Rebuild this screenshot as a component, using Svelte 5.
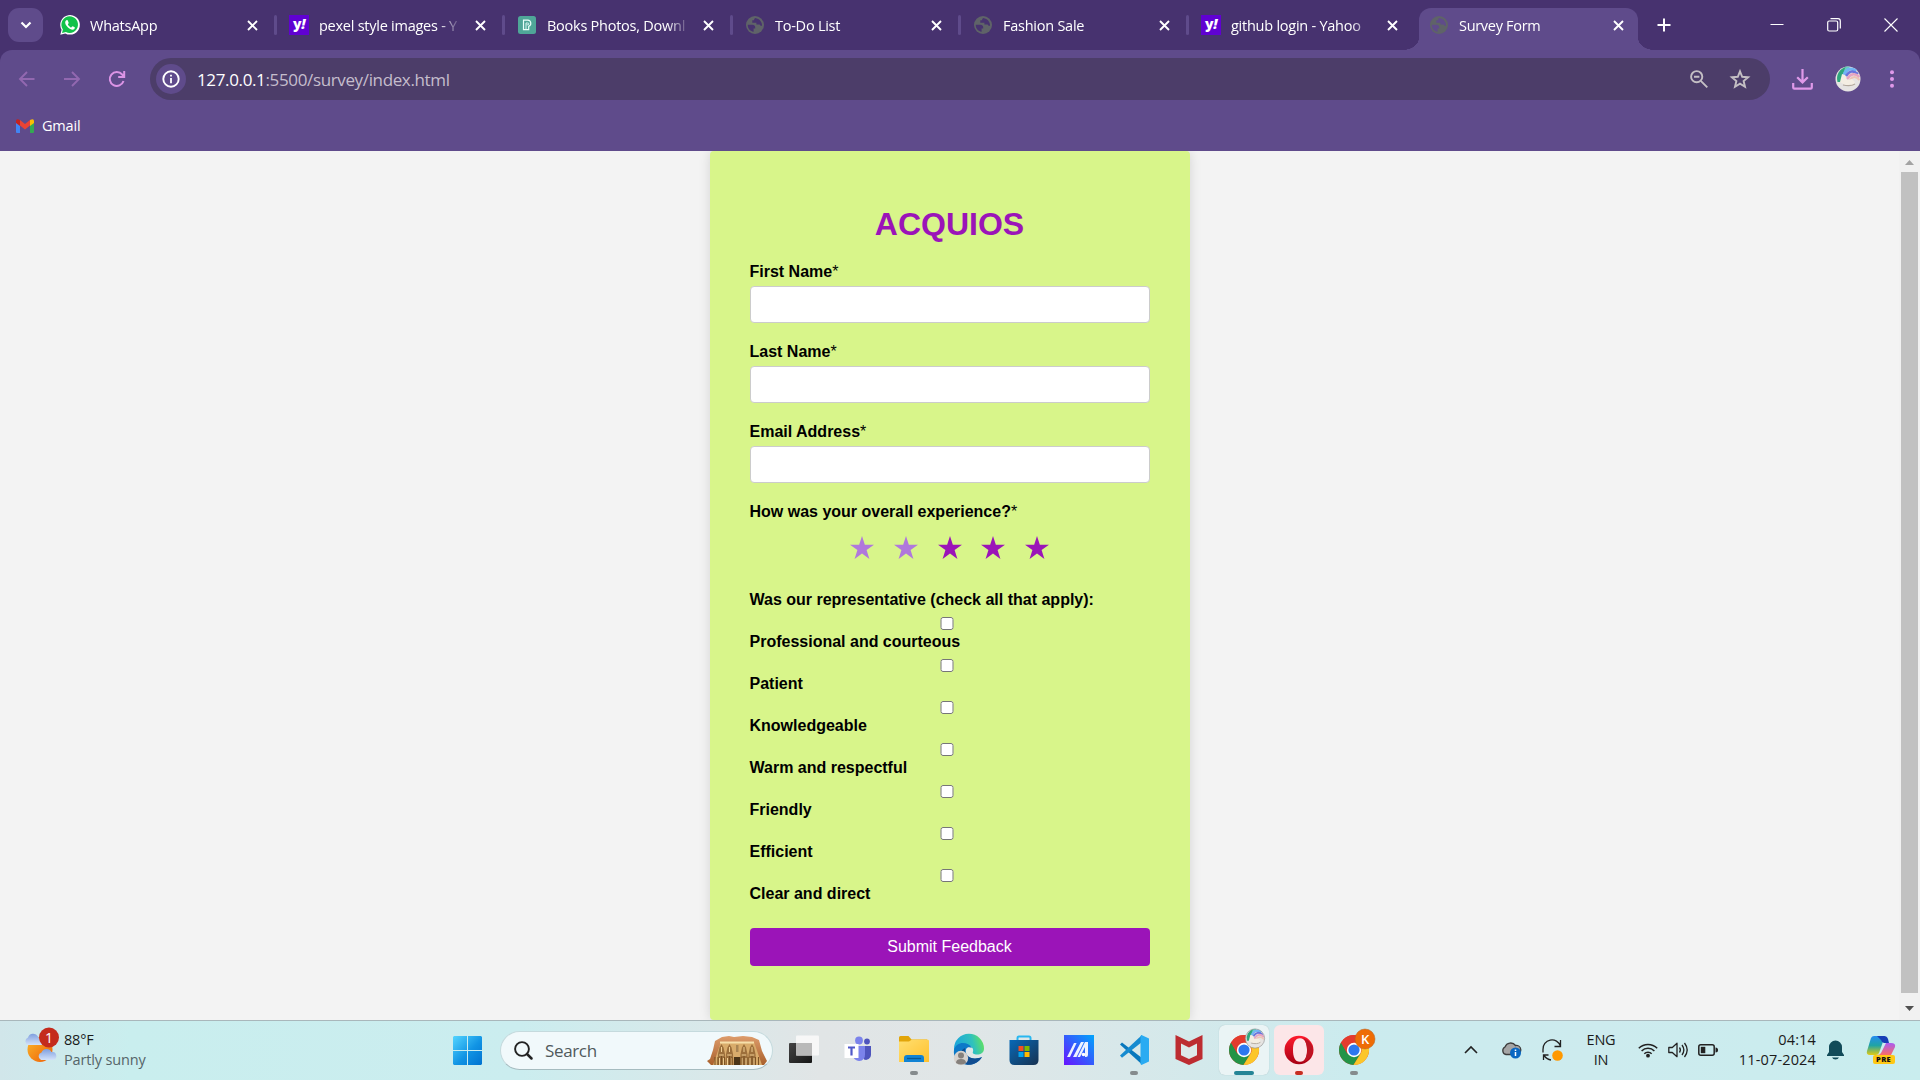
<script>
  const tabs = [
    { icon: 'whatsapp', title: 'WhatsApp' },
    { icon: 'yahoo', title: 'pexel style images - Y' },
    { icon: 'pexels', title: 'Books Photos, Downl' },
    { icon: 'globe', title: 'To-Do List' },
    { icon: 'globe', title: 'Fashion Sale' },
    { icon: 'yahoo', title: 'github login - Yahoo' },
    { icon: 'globe', title: 'Survey Form', active: true }
  ];
  const fields = ['First Name', 'Last Name', 'Email Address'];
  const stars = [false, false, true, true, true];
  const traits = [
    'Professional and courteous',
    'Patient',
    'Knowledgeable',
    'Warm and respectful',
    'Friendly',
    'Efficient',
    'Clear and direct'
  ];
  const apps = [
    { name: 'taskview' },
    { name: 'teams' },
    { name: 'explorer', mark: 'dot' },
    { name: 'edge' },
    { name: 'store' },
    { name: 'asus' },
    { name: 'vscode', mark: 'dot' },
    { name: 'mcafee' },
    { name: 'chrome', tile: 'tile-current', mark: 'bar' },
    { name: 'opera', tile: 'tile-alert', mark: 'red' },
    { name: 'chromek', mark: 'dot' }
  ];
</script>

{#snippet cross()}
  <svg class="cross" width="11" height="11" viewBox="0 0 11 11"><path d="M1 1l9 9M10 1l-9 9" stroke="#fff" stroke-width="1.9" fill="none" /></svg>
{/snippet}

{#snippet favicon(name)}
  {#if name === 'whatsapp'}
    <svg width="20" height="20" viewBox="0 0 20 20">
      <path d="M0.3 19.7L1.6 14.8A9.8 9.8 0 1 1 5.3 18.4Z" fill="#fff" />
      <path d="M2 18l.9-3.6A8.3 8.3 0 1 1 5.9 17Z" fill="#12c24a" />
      <path d="M7 5.1c-.8 0-1.8 1-1.8 2.4 0 3 4.4 7.2 7.4 7.2 1.4 0 2.3-1 2.3-2.1 0-.4-2-1.4-2.4-1.4s-.9 1.2-1.3 1.2c-.7 0-3.3-2.2-3.3-3 0-.4.8-.8.8-1.3 0-.4-.8-2.4-1.1-2.8z" fill="#fff" />
    </svg>
  {:else if name === 'yahoo'}
    <span class="yahoo">y<i>!</i></span>
  {:else if name === 'pexels'}
    <svg width="20" height="20" viewBox="0 0 20 20">
      <rect x="1" y="1" width="18" height="18" rx="2.5" fill="#4fa698" />
      <path d="M6.500 5.200h4.300a3.200 3.200 0 0 1 .9 6.200v3.200H6.500z" fill="none" stroke="#e9fffa" stroke-width="1.200" /><path d="M9 14.500V8h1.600q1.300 0 1.300.900t-1.300.900H9.500" fill="none" stroke="#e9fffa" stroke-width=".9" />
    </svg>
  {:else}
    <svg width="20" height="20" viewBox="0 0 20 20">
      <circle cx="10" cy="10" r="9" fill="#5f6368" />
      <path d="M2.8 9.7h4.4c2 0 3 1 3 2.6v1.2H8.6v3.2C4.8 16 2.5 13.3 2.8 9.7zM10.3 2.9c-1 .8-1.3 1.4-1.2 2.3H7.3v2.6h4.1v1.7h3.2l1 1.3h1.5c0-4-2.4-7-6.8-7.9z" class="land" />
    </svg>
  {/if}
{/snippet}

{#snippet chrome()}
  <circle cx="15" cy="15" r="15" fill="#e33b2e" />
  <path d="M2 7.5A15 15 0 0 0 14.5 30L21.5 18.8 15 15 8.5 18.8Z" fill="#239447" />
  <path d="M28 7.5A15 15 0 0 1 14.5 30L21.5 18.8A7.5 7.5 0 0 0 21.5 11.2L15 7.5Z" fill="#fcc629" />
  <path d="M2 7.5A15 15 0 0 1 28 7.5H15A7.5 7.5 0 0 0 8.5 18.8Z" fill="#e33b2e" />
  <circle cx="15" cy="15" r="7.2" fill="#fff" />
  <circle cx="15" cy="15" r="5.6" fill="#2d78ee" />
{/snippet}

{#snippet unicorn()}
  <circle cx="13" cy="13" r="12.5" fill="#e6e4e2" />
  <path d="M2.500 16A12.500 12.500 0 0 1 11 .700L13 3 7 16Z" fill="#2fa67c" />
  <path d="M10.500 .800A12.500 12.500 0 0 1 15 .700L8 11l-2 3z" fill="#69cfc0" />
  <path d="M9 9C11 3 16 1 21 5" fill="none" stroke="#71b5f4" stroke-width="3" />
  <path d="M11 10C14 5 18 4 23 8" fill="none" stroke="#6a74dd" stroke-width="2.500" />
  <path d="M12 13C16 7 20 7 24.500 11" fill="none" stroke="#e7a4c2" stroke-width="2.500" />
  <path d="M14 15C17 10 21 10 24.500 14" fill="none" stroke="#eec3b4" stroke-width="2" />
  <path d="M5 16L7 8l3 1 2 5 5-1 3 3-2 4-8-1Z" fill="#f4eee3" />
  <path d="M8 19c5 1 9 1 12-1" fill="none" stroke="#b3a99e" stroke-width="1.2" />
{/snippet}

{#snippet appIcon(name)}
  {#if name === 'taskview'}
    <svg width="34" height="34" viewBox="0 0 34 34"><defs><linearGradient id="tv" x2="1" y2="1"><stop stop-color="#444" /><stop offset="1" stop-color="#161616" /></linearGradient></defs>
      <rect x="2" y="10" width="23" height="20" rx="1" fill="url(#tv)" /><rect x="9" y="2.500" width="23" height="20" rx="1" fill="#f7f7f7" /><rect x="9" y="10" width="16" height="12.5" fill="#b9b9b9" />
    </svg>
  {:else if name === 'teams'}
    <svg width="34" height="34" viewBox="0 0 34 34">
      <circle cx="25" cy="8.500" r="2.900" fill="#4e55bd" /><circle cx="17" cy="7.500" r="3.900" fill="#7b83eb" />
      <path d="M20 13h9v9a5 5 0 0 1-7 4.500z" fill="#4e55bd" /><path d="M11 13h12v8.500a6 6 0 0 1-12 1z" fill="#7b83eb" />
      <rect x="2.500" y="11" width="14" height="14" fill="#fff" /><path d="M6 14.500h7M9.500 14v8.500" stroke="#5059c9" stroke-width="2.200" />
    </svg>
  {:else if name === 'explorer'}
    <svg width="34" height="34" viewBox="0 0 34 34"><defs><linearGradient id="fo" x2="1" y2="1"><stop stop-color="#ffdf70" /><stop offset="1" stop-color="#ffc12e" /></linearGradient></defs>
      <path d="M2 4.500q0-1.500 1.500-1.500h8l3 3.500H30V12H2z" fill="#e2a50a" /><path d="M2 8.500h10l3-2h15.500q1.500 0 1.500 1.500v21H2z" fill="url(#fo)" />
      <path d="M7 29v-4q0-3 3-3h14q3 0 3 3v4z" fill="#1183d4" /><path d="M10 25.500h14" stroke="#075895" stroke-width="1.300" />
    </svg>
  {:else if name === 'edge'}
    <svg width="34" height="34" viewBox="0 0 34 34"><defs><linearGradient id="ed" y1="0.200" x2="1"><stop stop-color="#1ca7d9" /><stop offset=".55" stop-color="#30c1bd" /><stop offset="1" stop-color="#6ce94b" /></linearGradient></defs>
      <path d="M2 16A15 15 0 0 1 32 15.500c0 4-3 6-7 6-3 0-5-1-4-3 1-3-2-6-6-6-6 0-11 3-13 8z" fill="url(#ed)" />
      <path d="M2 17C4 8 16 8 20 15c-5-2-7 1-6 5 2 6 9 7 16 4-4 7-12 9-19 7C5 29 1 23 2 17z" fill="#0c79c8" /><path d="M13 15c-1 8 7 13 17 9-4 7-13 10-19 6-5-4-4-12 2-15z" fill="#104d91" />
      <circle cx="9" cy="25" r="7.200" fill="#d6d2ce" /><circle cx="9" cy="22.500" r="3" fill="#85807c" /><path d="M4 30q0-4 5-4t5 4q-5 3-10 0z" fill="#85807c" />
    </svg>
  {:else if name === 'store'}
    <svg width="34" height="34" viewBox="0 0 34 34"><defs><linearGradient id="st" x2="1" y2="1"><stop stop-color="#0869b7" /><stop offset="1" stop-color="#173251" /></linearGradient></defs>
      <path d="M10.500 8V5q0-1.500 1.500-1.500h10q1.500 0 1.500 1.500v3" fill="none" stroke="#28b7f0" stroke-width="2" /><path d="M2.500 7h29v20q0 5-5 5h-19q-5 0-5-5z" fill="url(#st)" />
      <path d="M11.500 13h5v5h-5z" fill="#f25022" /><path d="M17.500 13h5v5h-5z" fill="#7fba00" /><path d="M11.500 19h5v5h-5z" fill="#00a4ef" /><path d="M17.500 19h5v5h-5z" fill="#ffb900" />
    </svg>
  {:else if name === 'asus'}
    <svg width="34" height="34" viewBox="0 0 34 34"><defs><linearGradient id="as" x1="0" y1="1" x2="1" y2="0"><stop stop-color="#6813ff" /><stop offset="1" stop-color="#00a5fb" /></linearGradient></defs>
      <rect x="2" y="2" width="30" height="30" fill="url(#as)" /><path d="M5 24L12 10h2.600L8 24zM11 24L19 9h3L14.500 24zM15.500 24L23 9h3v13q0 2-2 2h-1V14l-5 10z" fill="#eef3ff" /><circle cx="21.500" cy="21.500" r="1.800" fill="#fff" />
    </svg>
  {:else if name === 'vscode'}
    <svg width="34" height="34" viewBox="0 0 34 34">
      <path d="M3 11.500L5 9.500 25 25v6.500z" fill="#0878bd" /><path d="M3 22.500l2 2.200L25 9V2z" fill="#168bd0" /><path d="M24.500 2L32 5.500v23L24.500 32l-1-1V3z" fill="#2aabf2" />
    </svg>
  {:else if name === 'mcafee'}
    <svg width="34" height="34" viewBox="0 0 34 34">
      <path d="M3.500 2L17 8.500 30.500 2v24L17 32 3.500 26z" fill="#bd2c31" /><path d="M9 10.500L17 14.500l8-4v11.800L17 26l-8-3.700z" fill="#dde8e9" />
    </svg>
  {:else if name === 'chrome'}
    <svg width="34" height="34" viewBox="-2 -2 34 34">{@render chrome()}
      <g transform="translate(16 -6.500) scale(.77)">{@render unicorn()}<circle cx="13" cy="13" r="12.500" fill="none" stroke="#8c8c8c" stroke-width=".8" /></g>
    </svg>
  {:else if name === 'opera'}
    <svg width="34" height="34" viewBox="0 0 34 34"><defs><linearGradient id="op" y1="0" x2="0" y2="1" x1="0"><stop stop-color="#ff1b2d" /><stop offset="1" stop-color="#a70014" /></linearGradient></defs>
      <path fill-rule="evenodd" d="M17 2.700a14.500 14.300 0 1 0 0 28.600 14.500 14.300 0 1 0 0-28.600zm1 2.500c5 0 7 5 7 11.800s-2 11.800-7 11.800S11 24 11 17s2-11.800 7-11.800z" fill="url(#op)" />
      <path d="M21 5c13 4 13 20 0 24 6-5 5-19 0-24z" fill="#bd1524" />
    </svg>
  {:else}
    <svg width="34" height="34" viewBox="-2 -2 34 34">{@render chrome()}
      <circle cx="26" cy="4" r="10" fill="#ee6c05" stroke="#b4611e" stroke-width=".5" /><text x="22" y="8.600" class="k">K</text>
    </svg>
  {/if}
{/snippet}

<div class="screen">
  <header class="tabstrip">
    <div class="tabsearch"><svg width="12" height="8" viewBox="0 0 12 8"><path d="M1.500 1.500L6 6l4.500-4.500" fill="none" stroke="#fff" stroke-width="2.200" /></svg></div>
    {#each tabs as tab, i}
      <div class={['tab', tab.active && 'active', i > 0 && i < 6 && 'inner']}>
        <span class="fav">{@render favicon(tab.icon)}</span>
        <span class="title">{tab.title}</span>
        {@render cross()}
      </div>
    {/each}
    <svg class="plus" width="14" height="14" viewBox="0 0 14 14"><path d="M7 .5v13M.5 7h13" stroke="#fff" stroke-width="2" /></svg>
    <div class="window">
      <svg width="14" height="14" viewBox="0 0 14 14"><path d="M.5 6.500h13" stroke="#fff" /></svg>
      <svg width="14" height="14" viewBox="0 0 14 14"><g fill="none" stroke="#fff" stroke-width="1.200"><rect x=".7" y="3" width="10" height="10" rx="1.500" /><path d="M3.500.7H11q2.300 0 2.300 2.300v7.500" /></g></svg>
      <svg width="14" height="14" viewBox="0 0 14 14"><path d="M.5.500l13 13M13.500.500l-13 13" stroke="#fff" stroke-width="1.100" /></svg>
    </div>
  </header>

  <nav class="toolbar">
    <div class="history">
      <svg width="18" height="18" viewBox="0 0 18 18"><path d="M16.500 9H2M9 2L2 9l7 7" fill="none" stroke="#9268b0" stroke-width="1.900" /></svg>
      <svg width="18" height="18" viewBox="0 0 18 18"><path d="M1 9h15M9 2l7 7-7 7" fill="none" stroke="#9268b0" stroke-width="1.900" /></svg>
      <svg width="18" height="18" viewBox="0 0 18 18"><path d="M15.500 11a7 7 0 1 1-1.300-6.500L16 6.500M16.200 1v6h-6" fill="none" stroke="#dc94e6" stroke-width="2" /></svg>
    </div>
    <div class="omnibox">
      <span class="info"><svg width="18" height="18" viewBox="0 0 18 18"><circle cx="9" cy="9" r="7.700" fill="none" stroke="#fff" stroke-width="1.900" /><path d="M9 8v5.200M9 4.700v1.700" stroke="#fff" stroke-width="1.800" /></svg></span>
      <span class="url"><b>127.0.0.1</b>:5500/survey/index.html</span>
      <svg width="18" height="18" viewBox="0 0 18 18"><circle cx="6.700" cy="6.700" r="5.600" fill="none" stroke="#c4bfc4" stroke-width="1.900" /><path d="M4 6.700h5.400M10.800 10.800l6.500 6.500" stroke="#c4bfc4" stroke-width="1.900" /></svg>
      <svg width="20" height="20" viewBox="0 0 20 20"><path d="M10 2.300l2.200 5.500 5.900.4-4.500 3.800 1.400 5.800-5-3.100-5 3.100 1.400-5.800L1.900 8.200l5.900-.4z" fill="none" stroke="#c4bfc4" stroke-width="1.900" /></svg>
    </div>
    <div class="actions">
      <svg width="21" height="21" viewBox="0 0 21 21"><path d="M10.500 0v13M5.200 8.200l5.300 5.200 5.300-5.200M1.200 14v4.500q0 1.200 1.200 1.200h16.200q1.200 0 1.200-1.200V14" fill="none" stroke="#df99e9" stroke-width="2.200" /></svg>
      <svg width="26" height="26" viewBox="0 0 26 26">{@render unicorn()}</svg>
      <svg class="dots" width="6" height="18" viewBox="0 0 6 18"><g fill="#df99e9"><circle cx="3" cy="2.200" r="2" /><circle cx="3" cy="9" r="2" /><circle cx="3" cy="15.800" r="2" /></g></svg>
    </div>
  </nav>

  <div class="bookmarks">
    <svg width="18" height="14" viewBox="0 0 18 14">
      <path d="M0 3h4v11H1q-1 0-1-1z" fill="#4285f4" /><path d="M14 3h4v10q0 1-1 1h-3z" fill="#34a853" />
      <path d="M4 1l5 4 5-4v5.500L9 10.500 4 6.500z" fill="#ea4335" /><path d="M0 4V2q0-3 4-1v6z" fill="#c5221f" /><path d="M18 4V2q0-3-4-1v6z" fill="#fbbc04" />
    </svg>
    <span>Gmail</span>
  </div>

  <main class="viewport">
    <form class="card">
      <h1>ACQUIOS</h1>
      {#each fields as field}
        <label class="field"><span class="label">{field}<em>*</em></span><input type="text" /></label>
      {/each}
      <div class="label">How was your overall experience?<em>*</em></div>
      <div class="stars">
        {#each stars as dark}
          <svg class={{ dark }} width="24" height="23" viewBox="0 0 24 23"><path d="M12 0l2.850 8.700H24l-7.400 5.400L19.400 23 12 17.500 4.600 23l2.800-8.900L0 8.700h9.150z" /></svg>
        {/each}
      </div>
      <div class="label">Was our representative (check all that apply):</div>
      <div class="traits">
        {#each traits as trait}
          <label><input type="checkbox" /><span class="label">{trait}</span></label>
        {/each}
      </div>
      <button type="button">Submit Feedback</button>
    </form>
    <div class="scrollbar">
      <svg width="9" height="5" viewBox="0 0 9 5"><path d="M4.500 0L9 5H0z" fill="#a3a3a3" /></svg>
      <div class="thumb"></div>
      <svg width="9" height="5" viewBox="0 0 9 5"><path d="M0 0h9L4.500 5z" fill="#505050" /></svg>
    </div>
  </main>

  <footer class="taskbar">
    <div class="weather">
      <svg width="36" height="38" viewBox="0 0 36 38"><defs><linearGradient id="sun" x2="1" y2="1"><stop stop-color="#fbb92b" /><stop offset="1" stop-color="#ee5c06" /></linearGradient><linearGradient id="cl" x2="0" y2="1"><stop stop-color="#7f9fdf" /><stop offset="1" stop-color="#d3e2fa" /></linearGradient></defs>
        <circle cx="15" cy="22.500" r="12.500" fill="url(#sun)" /><path d="M3 18a4 4 0 0 1 0-7.500 5.500 5.500 0 0 1 10-1l5 8.500z" fill="url(#cl)" />
        <path d="M16 33a4 4 0 0 1 .5-7.500 5.500 5.500 0 0 1 10-.5 4 4 0 0 1 1.500 8z" fill="url(#cl)" />
        <circle cx="24" cy="10.500" r="10" fill="#c42b1c" /><text x="20" y="16" class="count">1</text>
      </svg>
      <div class="forecast"><span>88°F</span><small>Partly sunny</small></div>
    </div>
    <svg class="start" width="29" height="29" viewBox="0 0 29 29"><defs><linearGradient id="win" gradientUnits="userSpaceOnUse" x2="29" y2="29"><stop stop-color="#54d5ff" /><stop offset=".55" stop-color="#1194e4" /><stop offset="1" stop-color="#0072d0" /></linearGradient></defs><path d="M1 0h13v14H0V1zM15 0h13l1 1v13H15zM0 15h14v14H1l-1-1zM15 15h14v13l-1 1H15z" fill="url(#win)" /></svg>
    <div class="search">
      <svg width="19" height="19" viewBox="0 0 19 19"><circle cx="8" cy="8" r="6.900" fill="none" stroke="#222" stroke-width="1.900" /><path d="M13 13l4.500 4.500" stroke="#222" stroke-width="2.500" stroke-linecap="round" /></svg>
      <span>Search</span>
      <svg width="60" height="33" viewBox="0 0 60 33"><defs><linearGradient id="rock" x2="0" y2="1"><stop stop-color="#dd9c6b" /><stop offset="1" stop-color="#a9602c" /></linearGradient></defs>
        <path d="M0 27L3 25 6 16 8 7 15 3l7-1 5 1 9-1 9 1 7 3 3 11 5 10-3 4H4z" fill="url(#rock)" /><path d="M14 8h33l8 23H6z" fill="#d9ac6b" />
        <path d="M13 8.500h34" stroke="#f6e0ab" stroke-width="1.800" /><path d="M29 11h2.500v7H29z" fill="#a98453" /><path d="M27 23h6v8h-6z" fill="#4b3518" />
        {#each [13, 21, 35.5, 43.5] as x}
          <g transform="translate({x} 10)"><path d="M1.500 0l2 3.500L5 10l.5 11H-2.500L-2 10l1.500-6.500z" fill="#9c6f3b" /><path d="M1.500 3v5M-.800 11h4.600M-.500 14v7M3.500 14v7" stroke="#efcf93" stroke-width="1" /><path d="M1.500 12v9" stroke="#6c471d" stroke-width=".8" /></g>
        {/each}
        {#each [8, 11, 17.5, 25, 34, 41, 48.5, 51.5] as x}
          <path d="M{x} 23v8" stroke="#7d5324" stroke-width="1.100" />
        {/each}
      </svg>
    </div>
    <div class="apps">
      {#each apps as app}
        <div class={['app', app.tile]}>{@render appIcon(app.name)}{#if app.mark}<i class={['mark', app.mark]}></i>{/if}</div>
      {/each}
    </div>
    <div class="tray">
      <svg class="t-up" width="14" height="8" viewBox="0 0 14 8"><path d="M1 7l6-6 6 6" fill="none" stroke="#222" stroke-width="1.600" /></svg>
      <svg class="t-cloud" width="20" height="18" viewBox="0 0 20 18"><path d="M5 13.500A4 4 0 0 1 4 6a6 6 0 0 1 10.500-1.500A4.500 4.500 0 0 1 16 13.500z" fill="#a5a5a5" stroke="#3c3c3c" stroke-width="1.300" /><circle cx="14.500" cy="12" r="5.500" fill="#0967c2" /><path d="M14.500 11v4M14.500 8.500v1.500" stroke="#fff" stroke-width="1.500" /></svg>
      <svg class="t-sync" width="21" height="21" viewBox="0 0 21 21"><path d="M1 12.500V9.500A9 9 0 0 1 18.500 6M18.500 0v6.500h-6M1.500 20v-5h5M2 15.500q3 4 7 4.500" fill="none" stroke="#222" stroke-width="1.300" /><circle cx="15.500" cy="15.500" r="5.300" fill="#ff9800" /></svg>
      <div class="lang"><span>ENG</span><span>IN</span></div>
      <svg class="t-wifi" width="20" height="16" viewBox="0 0 20 16"><g fill="none" stroke="#222" stroke-width="1.500"><path d="M.8 6.200a13 13 0 0 1 18.400 0M3.600 9a9 9 0 0 1 12.800 0M6.300 11.700a5.200 5.200 0 0 1 7.400 0" /></g><circle cx="10" cy="13.700" r="1.900" fill="#222" /></svg>
      <svg class="t-vol" width="20" height="16" viewBox="0 0 20 16"><path d="M.8 5.500h3.500L9 1.300v13.400L4.300 10.500H.8zM11.500 5.500q1.800 2.500 0 5M14 3q3.700 5 0 10M16.500 1q5.400 7 0 14" fill="none" stroke="#222" stroke-width="1.300" stroke-linejoin="round" /></svg>
      <svg class="t-bat" width="20" height="12" viewBox="0 0 20 12"><rect x=".8" y=".8" width="15.400" height="10.400" rx="2" fill="none" stroke="#222" stroke-width="1.500" /><rect x="2.800" y="2.800" width="4.500" height="6.400" fill="#222" /><path d="M17.500 3.500q2.500 0 2.500 2.500t-2.500 2.500z" fill="#222" /></svg>
      <div class="clock"><span>04:14</span><span>11-07-2024</span></div>
      <svg class="t-bell" width="17" height="20" viewBox="0 0 17 20"><path d="M2 7a6.500 6.500 0 0 1 13 0v5l2 3v1H0v-1l2-3zM5 17.500h7q-1 2-3.500 2T5 17.500z" fill="#124b59" /></svg>
      <svg class="t-pilot" width="30" height="30" viewBox="0 0 30 30"><defs><linearGradient id="p1" x2="0" y2="1"><stop stop-color="#258cf0" /><stop offset=".5" stop-color="#20a4a4" /><stop offset="1" stop-color="#e3cb12" /></linearGradient><linearGradient id="p2" x2="0" y2="1"><stop stop-color="#a95df2" /><stop offset="1" stop-color="#fa6c66" /></linearGradient></defs>
        <path d="M8 1h11l-6 17q-1 2-3 2H4q-4 0-3-4L5 3q1-2 3-2z" fill="url(#p1)" /><path d="M11 1h7q3 0 4 3l1 4h-5q-2 0-3-3z" fill="#173eb6" /><path d="M20 8h5q5 0 4 4l-4 8H11q3 0 4-2z" fill="url(#p2)" />
        <rect x="7" y="20" width="22" height="9" rx="2" fill="#ffc814" /><text x="10" y="27.300" class="pre">PRE</text>
      </svg>
    </div>
  </footer>
</div>

<style>
  :global(body) { margin: 0; overflow: hidden; }
  .screen { width: 1920px; height: 1080px; display: flex; flex-direction: column; overflow: hidden; background: #47326f; font-family: 'Open Sans', 'Noto Sans', sans-serif; }
  .screen * { box-sizing: border-box; }
  svg { display: block; flex: none; overflow: visible; }

  .tabstrip { height: 50px; flex: none; display: flex; align-items: center; background: #47326f; padding-left: 8px; }
  .tabsearch { width: 35px; height: 34px; border-radius: 11px; background: #5f4b8b; display: grid; place-items: center; margin-right: 5px; }
  .tab { width: 228px; height: 42px; flex: none; display: flex; align-items: center; position: relative; padding: 0 18.5px 8px 12px; margin-top: 8px; }
  .tab.inner { padding-left: 13px; }
  .tab:not(.active, :nth-child(7))::after { content: ''; width: 3px; height: 20px; border-radius: 2px; background: #5f4b8b; position: absolute; right: -1px; top: 7px; }
  .fav { width: 20px; height: 20px; margin-right: 10px; flex: none; }
  .title { flex: 1; font-size: 14.5px; line-height: 20px; padding-top: 1px; letter-spacing: -0.25px; color: #fff; white-space: nowrap; margin-right: 15px; mask-image: linear-gradient(90deg, #000 120px, transparent 143px); }
  .land { fill: #47326f; }
  .tab.active { width: 219px; margin-left: 3px; background: #5f4b8b; border-radius: 12px 12px 0 0; padding: 0 14px 8px 10px; }
  .tab.active .title { letter-spacing: -0.3px; }
  .tab.active .land { fill: #5f4b8b; }
  .tab.active::before, .tab.active::after { content: ''; position: absolute; bottom: 0; width: 16px; height: 12px; }
  .tab.active::before { left: -16px; background: radial-gradient(ellipse 16px 12px at 0 0, transparent 98%, #5f4b8b 100%); }
  .tab.active::after { right: -16px; background: radial-gradient(ellipse 16px 12px at 100% 0, transparent 98%, #5f4b8b 100%); }
  .yahoo { display: block; width: 20px; height: 20px; background: #6001d2; color: #fff; font: 800 14px/17px 'Open Sans', sans-serif; text-align: center; letter-spacing: -0.5px; }
  .plus { margin-left: 19px; }
  .window { margin-left: auto; display: flex; gap: 43px; padding-right: 22px; }

  .toolbar { height: 58px; flex: none; display: flex; align-items: center; background: #5f4b8b; border-radius: 12px 12px 0 0; }
  .history { display: flex; gap: 27px; padding-left: 18px; width: 150px; flex: none; }
  .omnibox { width: 1620px; height: 42px; flex: none; border-radius: 21px; background: #4c3d69; display: flex; align-items: center; padding: 0 20px 0 6px; gap: 22px; }
  .info { width: 30px; height: 30px; border-radius: 50%; background: #5f4b8b; display: grid; place-items: center; }
  .url { flex: 1; font-size: 17px; line-height: 24px; padding-top: 1px; color: #c5bdcd; margin-left: -11px; letter-spacing: -0.36px; }
  .url b { font-weight: 400; color: #fff; }
  .actions { display: flex; align-items: center; padding-left: 22px; gap: 22px; }
  .dots { margin-left: 6px; }
  .bookmarks { height: 43px; flex: none; background: #5f4b8b; display: flex; align-items: center; padding: 0 0 8px 16px; gap: 8px; color: #fff; font-size: 14.5px; letter-spacing: -0.2px; }

  .viewport { height: 869px; flex: none; display: flex; background: #f3f3f3; overflow: hidden; font-family: 'Liberation Sans', Arial, sans-serif; }
  .card { width: 480px; height: 869px; margin-left: 710px; padding: 53px 40px 0; background: #d8f58a; border-radius: 4px; box-shadow: 0 0 12px rgba(0, 0, 0, 0.13); color: #000; font-size: 16px; }
  h1 { margin: 0 0 18px; height: 40px; padding-right: 1px; font-size: 32px; line-height: 40px; text-align: center; color: #9b14b8; font-weight: 700; }
  .field { display: block; height: 80px; }
  .label { display: block; font-weight: 700; line-height: 18px; height: 18px; padding-top: 1px; margin-left: -0.5px; }
  .label em { font-style: normal; font-weight: 400; }
  .field input { display: block; width: 400px; height: 37px; margin-top: 6px; border: 1px solid #ccc; border-radius: 4px; background: #fff; }
  .stars { display: flex; justify-content: center; gap: 19.75px; padding: 16px 1px 31px 0; }
  .stars svg { fill: #b078dc; }
  .stars .dark { fill: #9b14b8; }
  .traits { padding-top: 9px; }
  .traits label { display: block; height: 42px; }
  .traits input { display: block; width: 13.5px; height: 13px; margin: 0 0 2px 190px; }
  button { display: block; width: 400px; height: 38px; margin-top: 17px; padding: 0 1px 0 0; border: 0; border-radius: 4px; background: #9b14b8; color: #fff; font: 16px 'Liberation Sans', Arial, sans-serif; }
  .scrollbar { margin-left: auto; width: 21px; background: #f1f1f1; display: flex; flex-direction: column; align-items: center; padding: 9px 0 9px; }
  .thumb { width: 17px; height: 821px; margin-top: 7px; background: #c1c1c1; }
  .thumb + svg { margin-top: auto; }

  .taskbar { height: 60px; flex: none; display: flex; align-items: center; padding-bottom: 1px; border-top: 1px solid #a9b7bb; background: linear-gradient(90deg, #d1e6ea 0, #c9eeee 130px, #cbedef 520px, #e1e5e6 820px, #e0e6e7 970px, #cbebee 1350px, #cdebee 1600px, #c9edee 1920px); color: #1b1b1b; }
  .weather { display: flex; width: 453px; padding-left: 25px; align-items: center; }
  .weather svg { margin-top: -8px; }
  .forecast { display: flex; flex-direction: column; margin-left: 3px; font-size: 14.5px; line-height: 20px; letter-spacing: -0.2px; }
  .forecast small { font-size: 14.5px; letter-spacing: -0.15px; color: #566569; }
  .count { font: 14px 'Open Sans', sans-serif; fill: #fff; }
  .search { width: 273px; height: 39px; flex: none; margin-left: 18px; border-radius: 20px; background: #f1f9fb; border: 1px solid #c5dadd; border-bottom-color: #a6bcc0; display: flex; align-items: center; padding: 0 5px 0 13px; font-size: 17px; color: #505a5c; }
  .search span { margin-left: 12px; flex: 1; letter-spacing: -0.35px; }
  .apps { display: flex; gap: 5.05px; margin-left: 5.5px; height: 58px; align-items: center; }
  .app { width: 50px; height: 50px; border-radius: 6px; display: grid; place-items: center; position: relative; }
  .tile-current { background: #eaf4f5; box-shadow: 0 0 1px #9db9bd; }
  .tile-alert { background: #fce6e8; }
  .mark { position: absolute; left: 21px; bottom: 0; width: 8px; height: 4px; border-radius: 2px; background: #858b8d; }
  .mark.bar { width: 20px; left: 15px; background: #258596; }
  .mark.red { background: #c62d21; }
  .k { font: 600 13px 'Open Sans', sans-serif; fill: #fff; }
  .tray { margin-left: auto; display: flex; align-items: center; padding-right: 24px; }
  .lang, .clock { display: flex; flex-direction: column; font-size: 14.5px; line-height: 20px; letter-spacing: -0.2px; }
  .t-cloud { margin-left: 23px; }
  .t-sync { margin-left: 21px; }
  .lang { width: 30px; margin-left: 23px; align-items: center; }
  .t-wifi { margin-left: 22px; }
  .t-vol { margin-left: 10px; }
  .t-bat { margin-left: 10px; }
  .clock { width: 80px; margin-left: 18px; align-items: flex-end; letter-spacing: 0.15px; }
  .t-bell { margin-left: 11px; }
  .t-pilot { margin-left: 22px; }
  .pre { font: 800 7.5px 'Open Sans', sans-serif; fill: #111; letter-spacing: 0.4px; }
</style>
